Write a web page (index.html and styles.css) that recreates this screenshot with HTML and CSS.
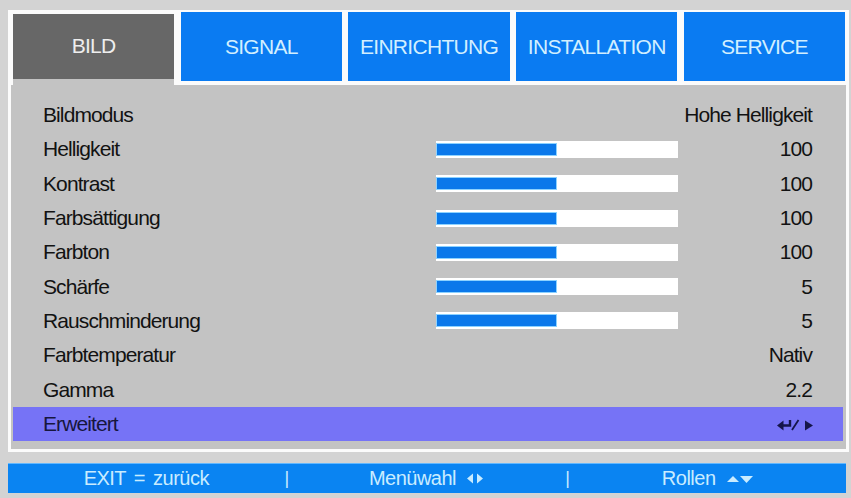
FILE: index.html
```html
<!DOCTYPE html>
<html lang="de">
<head>
<meta charset="utf-8">
<title>BILD</title>
<link rel="stylesheet" href="styles.css">
</head>
<body>
<div class="panel">
  <div class="tabs">
    <div class="tab active">BILD</div>
    <div class="tab">SIGNAL</div>
    <div class="tab">EINRICHTUNG</div>
    <div class="tab">INSTALLATION</div>
    <div class="tab">SERVICE</div>
  </div>
  <div class="menu">
    <div class="row"><span class="label">Bildmodus</span><span class="value">Hohe Helligkeit</span></div>
    <div class="row"><span class="label">Helligkeit</span><span class="bar"><span class="fill" style="width:50%"></span></span><span class="value">100</span></div>
    <div class="row"><span class="label">Kontrast</span><span class="bar"><span class="fill" style="width:50%"></span></span><span class="value">100</span></div>
    <div class="row"><span class="label">Farbsättigung</span><span class="bar"><span class="fill" style="width:50%"></span></span><span class="value">100</span></div>
    <div class="row"><span class="label">Farbton</span><span class="bar"><span class="fill" style="width:50%"></span></span><span class="value">100</span></div>
    <div class="row"><span class="label">Schärfe</span><span class="bar"><span class="fill" style="width:50%"></span></span><span class="value">5</span></div>
    <div class="row"><span class="label">Rauschminderung</span><span class="bar"><span class="fill" style="width:50%"></span></span><span class="value">5</span></div>
    <div class="row"><span class="label">Farbtemperatur</span><span class="value">Nativ</span></div>
    <div class="row"><span class="label">Gamma</span><span class="value">2.2</span></div>
    <div class="row selected"><span class="label">Erweitert</span><span class="value">
      <svg class="enter-icon" width="37" height="12" viewBox="0 0 37 12" aria-hidden="true">
        <polygon points="0,6.5 6.5,1.5 6.5,11.5" fill="#15154a"/>
        <path d="M5 6.5 H13 V1" stroke="#15154a" stroke-width="2.4" fill="none"/>
        <path d="M15 11 L21.5 1" stroke="#15154a" stroke-width="1.8" fill="none"/>
        <polygon points="28,1.5 36,6.5 28,11.5" fill="#15154a"/>
      </svg>
    </span></div>
  </div>
</div>
<div class="footer">
  <span class="hint">EXIT = zurück</span>
  <span class="sep">|</span>
  <span class="hint">Menüwahl
    <svg class="arrows" width="19" height="11" viewBox="0 0 19 11" aria-hidden="true">
      <polygon points="7,0.5 7,10.5 1,5.5" fill="#c9ecff"/>
      <polygon points="11,0.5 11,10.5 17,5.5" fill="#c9ecff"/>
    </svg>
  </span>
  <span class="sep">|</span>
  <span class="hint">Rollen
    <svg class="arrows" width="28" height="10" viewBox="0 0 28 10" aria-hidden="true">
      <polygon points="1,8 7,2 13,8" fill="#c9ecff"/>
      <polygon points="14,2 27,2 20.5,9" fill="#c9ecff"/>
    </svg>
  </span>
</div>
</body>
</html>
```

FILE: styles.css
```css
html, body {
  margin: 0;
  padding: 0;
}

body {
  width: 851px;
  height: 498px;
  overflow: hidden;
  background: #d3d3d3;
  font-family: "Liberation Sans", Arial, sans-serif;
  color: #121212;
}

.panel {
  margin: 10px 0 0 8px;
  width: 841px;
  box-sizing: border-box;
  border: 3px solid #fbfbfb;
  border-top-width: 2px;
  background: #c3c3c3;
}

.tabs {
  display: flex;
  align-items: flex-start;
  gap: 6.5px;
  padding: 0 1px 0 2px;
  height: 73px;
  background: #fbfbfb;
}

.tab {
  flex: 1;
  height: 69px;
  display: flex;
  align-items: center;
  justify-content: center;
  background: #0a7bf2;
  color: #d2efff;
  font-size: 21px;
  letter-spacing: -0.7px;
}

.tab.active {
  margin-top: 2px;
  background: #676767;
  color: #eeeeee;
  border-bottom: 6px solid #c3c3c3;
  padding-bottom: 2px;
  box-sizing: content-box;
  height: 63px;
}

.menu {
  padding: 13px 0 8px;
}

.row {
  display: flex;
  align-items: center;
  height: 34.3px;
  margin: 0 3px 0 2px;
  padding: 0 31px 0 30px;
  font-size: 21px;
  letter-spacing: -0.9px;
}

.row.selected {
  background: #7673f6;
  color: #16163e;
}

.label {
  flex: 0 0 393px;
  white-space: nowrap;
}

.value {
  flex: 1;
  text-align: right;
  white-space: nowrap;
}

.bar {
  flex: 0 0 242px;
  height: 17px;
  background: #ffffff;
  box-sizing: border-box;
  padding: 2px 0;
}

.fill {
  display: block;
  height: 13px;
  box-sizing: border-box;
  background: #0a78ea;
  border: 1px solid #8cd2ff;
}

.enter-icon {
  vertical-align: middle;
  margin-right: -2px;
}

.footer {
  margin: 11px 5px 0 8px;
  height: 30px;
  box-sizing: border-box;
  border-top: 1px solid #62b8ff;
  background: #0a84f2;
  display: flex;
  align-items: center;
  color: #c9ecff;
  font-size: 20px;
  letter-spacing: -0.5px;
}

.hint {
  flex: 1;
  text-align: center;
  white-space: nowrap;
  word-spacing: 3px;
}

.sep {
  flex: 0 0 auto;
  font-size: 18px;
}

.arrows {
  vertical-align: 1px;
  margin-left: 2px;
}
```
